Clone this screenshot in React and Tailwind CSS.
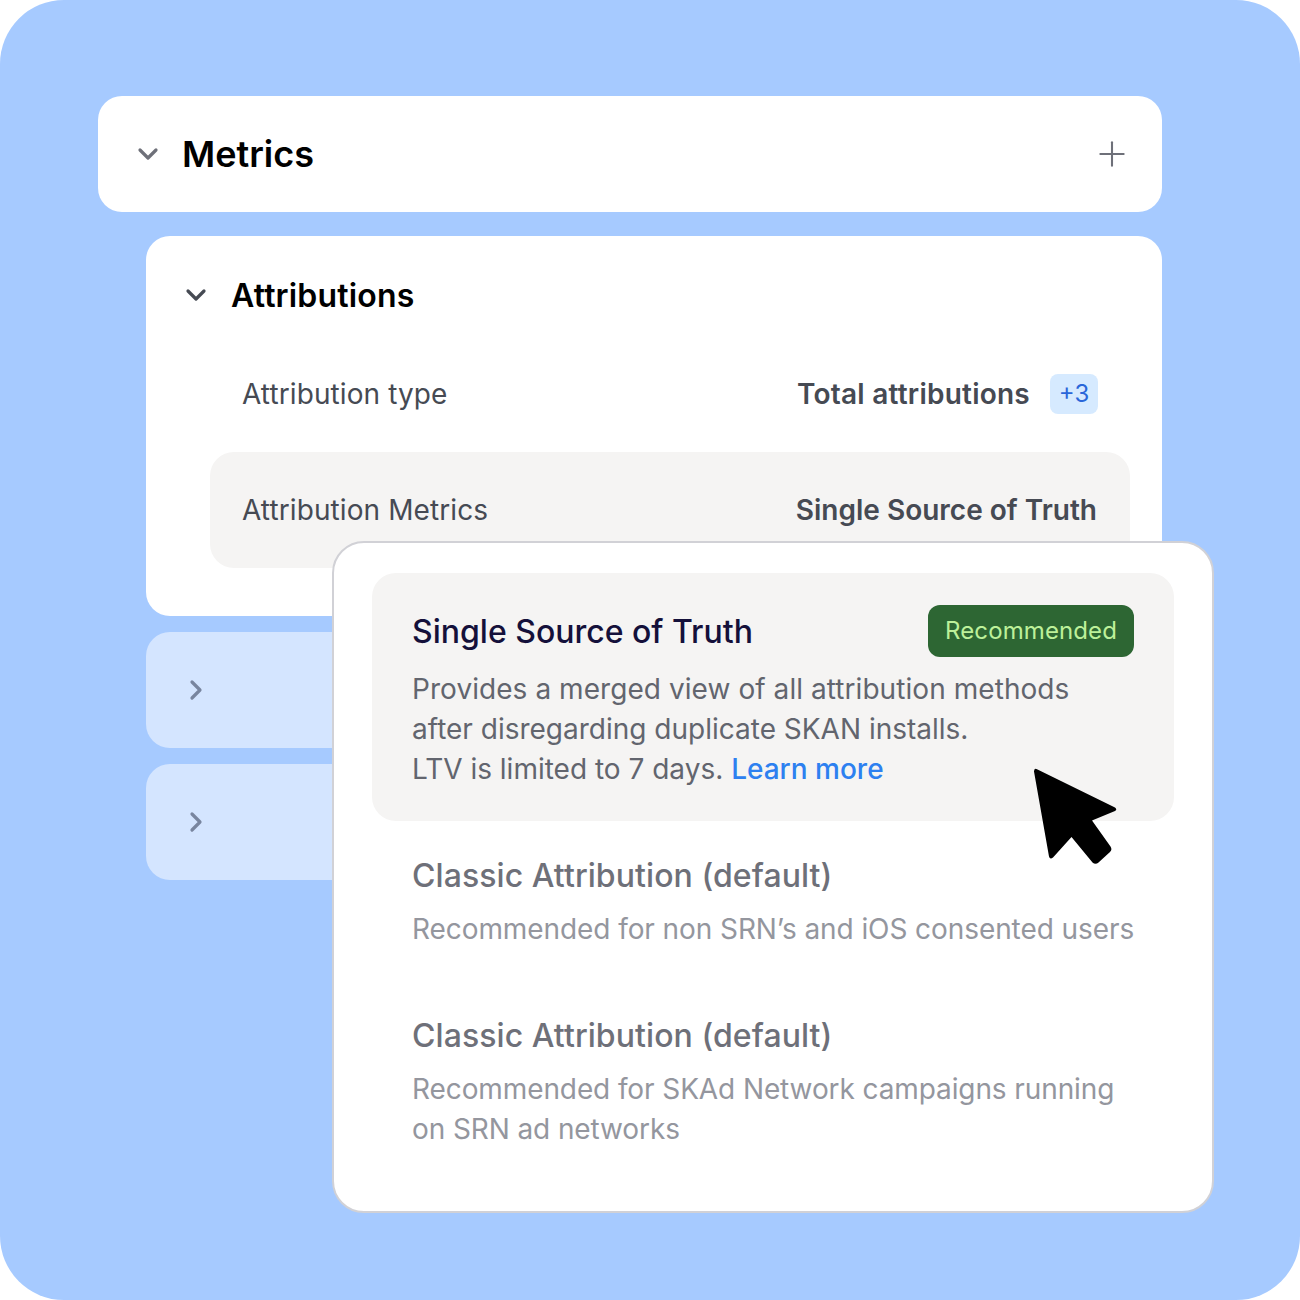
import { ChevronDown, ChevronRight, Plus } from 'lucide-react'

function Cursor() {
  return (
    <svg className="absolute left-[1024px] top-[758px]" width="102" height="116" viewBox="0 0 102 116">
      <path
        d="M12.5 11 L91 49.5 Q93.5 51.5 91 53 L68 62.5 L86.5 88.5 Q88.5 91.5 86 94 L74.5 104.5 Q71.5 107 68.5 104.5 L47.5 79 L29 99.5 Q26 102 25 98.5 L10 13.5 Q10 10 12.5 11 Z"
        fill="#000"
      />
    </svg>
  )
}

function Row({ label, value, children, active, valueClass }) {
  return (
    <div className={`h-[116px] pl-[32px] flex items-center justify-between rounded-[24px] text-[28px] text-[#464a53] ${active ? 'bg-[#f5f4f3] pr-[33px]' : 'pr-[32px]'}`}>
      <span className="tracking-[0.1px]">{label}</span>
      <div className="flex items-center gap-[20px]">
        <span className={`font-semibold ${valueClass}`}>{value}</span>
        {children}
      </div>
    </div>
  )
}

export default function App() {
  return (
    <div className="relative w-[1300px] h-[1300px] bg-[#a6caff] rounded-[64px] pt-[96px] pl-[98px] overflow-hidden font-['Inter',sans-serif]">
      <div className="w-[1064px] flex flex-col items-end">
        <div className="w-full h-[116px] bg-white rounded-[24px] flex items-center pl-[34px] pr-[30px]">
          <ChevronDown className="w-[32px] h-[32px] text-[#6e7079]" strokeWidth={2.4} />
          <span className="ml-[18px] text-[36px] font-semibold text-black">Metrics</span>
          <Plus className="ml-auto w-[40px] h-[40px] text-[#6e7079]" strokeWidth={1.25} />
        </div>

        <div className="w-[1016px] h-[380px] mt-[24px] bg-white rounded-[24px] pl-[34px] pr-[32px]">
          <div className="h-[100px] pt-[18px] flex items-center">
            <ChevronDown className="w-[32px] h-[32px] text-[#464a53]" strokeWidth={2.4} />
            <span className="ml-[19px] text-[32px] font-semibold text-black tracking-[0.17px] pt-[1px]">Attributions</span>
          </div>
          <div className="ml-[30px]">
            <Row label="Attribution type" value="Total attributions" valueClass="tracking-[0.23px]">
              <span className="w-[48px] h-[40px] rounded-[8px] bg-[#d6eaff] text-[#2a66d9] flex items-center justify-center text-[24px]">+3</span>
            </Row>
            <Row label="Attribution Metrics" value="Single Source of Truth" active />
          </div>
        </div>

        <div className="w-[1016px] h-[116px] mt-[16px] bg-[#d4e5ff] rounded-[24px] flex items-center pl-[34px]">
          <ChevronRight className="w-[32px] h-[32px] text-[#78859f]" strokeWidth={2.4} />
        </div>
        <div className="w-[1016px] h-[116px] mt-[16px] bg-[#d4e5ff] rounded-[24px] flex items-center pl-[34px]">
          <ChevronRight className="w-[32px] h-[32px] text-[#78859f]" strokeWidth={2.4} />
        </div>
      </div>

      <div className="absolute left-[332px] top-[541px] w-[882px] h-[672px] bg-white border-2 border-[#d1d1d6] rounded-[32px] pt-[30px] pl-[38px] pr-[38px]">
        <div className="h-[248px] bg-[#f5f4f3] rounded-[24px] pt-[32px] pl-[40px] pr-[40px]">
          <div className="flex items-center justify-between h-[52px]">
            <span className="pt-[2px] text-[32px] font-medium text-[#14103a]">Single Source of Truth</span>
            <span className="w-[206px] h-[52px] bg-[#2d6633] rounded-[12px] flex items-center justify-center text-[24px] text-[#bdf09a] tracking-[0.1px]">Recommended</span>
          </div>
          <p className="mt-[12px] text-[28px] leading-[40px] text-[#62656e]">
            <span className="tracking-[0.06px]">Provides a merged view of all attribution methods</span><br />
            after disregarding duplicate SKAN installs.<br />
            LTV is limited to 7 days. <span className="text-[#2d80f0] font-medium">Learn more</span>
          </p>
        </div>
        <div className="pl-[40px] pt-[31px]">
          <div className="text-[32px] leading-[48px] font-medium text-[#6e7079] tracking-[0.07px]">Classic Attribution (default)</div>
          <p className="mt-[9px] text-[28px] leading-[40px] text-[#94969e] tracking-[-0.08px]">Recommended for non SRN’s and iOS consented users</p>
          <div className="mt-[63px] text-[32px] leading-[48px] font-medium text-[#6e7079] tracking-[0.07px]">Classic Attribution (default)</div>
          <p className="mt-[9px] text-[28px] leading-[40px] text-[#94969e] tracking-[-0.1px]">
            Recommended for SKAd Network campaigns running<br />
            on SRN ad networks
          </p>
        </div>
      </div>

      <Cursor />
    </div>
  )
}
